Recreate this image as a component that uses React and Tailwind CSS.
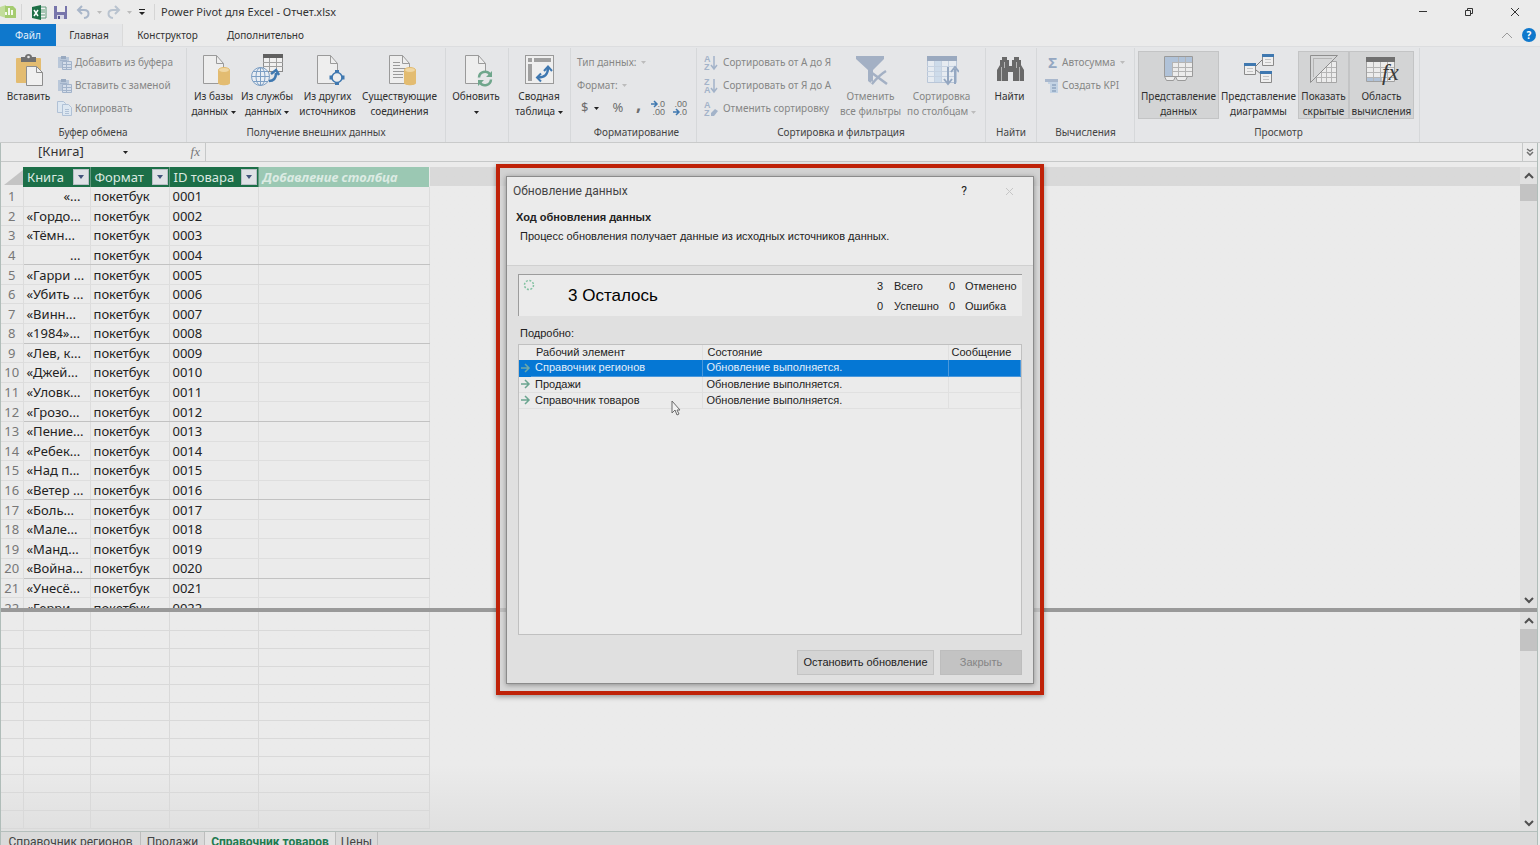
import { clsx } from "clsx";

const books = [
  "«...",
  "«Гордо...",
  "«Тёмн...",
  "...",
  "«Гарри ...",
  "«Убить ...",
  "«Винн...",
  "«1984»...",
  "«Лев, к...",
  "«Джей...",
  "«Уловк...",
  "«Грозо...",
  "«Пение...",
  "«Ребек...",
  "«Над п...",
  "«Ветер ...",
  "«Боль...",
  "«Мале...",
  "«Манд...",
  "«Война...",
  "«Унесё...",
  "«Герри...",
];

const rightAligned = [1, 4];
const groupEnds = [4, 8, 12, 16, 20];

const tasks = ["Справочник регионов", "Продажи", "Справочник товаров"];

const sheets = [
  { name: "Справочник регионов", width: "w-[140px]" },
  { name: "Продажи", width: "w-16" },
  { name: "Справочник товаров", width: "w-[131px]", active: true },
  { name: "Цены", width: "w-[42px]" },
];

/* ---------- icons ---------- */

function Page({ lines }) {
  return (
    <>
      <path d="M6.500 2.500h13l7 8v20h-20z" fill="#eeeeee" stroke="#9a9a9a" />
      <path d="M19.500 2.500v8h7" fill="none" stroke="#9a9a9a" />
      {lines && (
        <path
          d="M10 9.500h7M10 12.500h7M10 15.500h13M10 18.500h13M10 21.500h10M10 24.500h10"
          stroke="#9a9a9a"
        />
      )}
    </>
  );
}

function Cylinder() {
  return (
    <>
      <path d="M21 17v13c0 3 12 3 12 0V17z" fill="#e3bc71" />
      <ellipse cx="27" cy="17" rx="5.500" ry="2.500" fill="#f0d7a3" stroke="#e3bc71" />
    </>
  );
}

function PasteIcon() {
  return (
    <svg width="34" height="34" viewBox="0 0 34 34">
      <rect x="4" y="5" width="25" height="25" rx="1" fill="#e3bc71" />
      <path d="M9 9V4h4c0-4 7-4 7 0h4v5z" fill="#707070" />
      <circle cx="16.500" cy="4" r="1.300" fill="#e8e8e8" />
      <path d="M14.500 13.500h10l6 6v13h-16z" fill="#f0f0f0" stroke="#8d8d8d" />
      <path d="M24.500 13.500v6h6" fill="none" stroke="#8d8d8d" />
    </svg>
  );
}

function DatabaseIcon() {
  return (
    <svg width="34" height="34" viewBox="0 0 34 34">
      <Page />
      <Cylinder />
    </svg>
  );
}

function ConnectionsIcon() {
  return (
    <svg width="34" height="34" viewBox="0 0 34 34">
      <Page lines />
      <Cylinder />
    </svg>
  );
}

function ServiceIcon() {
  return (
    <svg width="34" height="34" viewBox="0 0 34 34">
      <rect x="13.500" y="1.500" width="19" height="17" fill="#f0f0f0" stroke="#8a8a8a" />
      <path d="M13 1h20v4H13z" fill="#606060" />
      <path d="M13 9.500h20M13 13.500h20M19.500 5v13M26.500 5v13" stroke="#a0a0a0" />
      <circle cx="10.500" cy="23.500" r="9" fill="#e9eef4" stroke="#7d9fc4" />
      <ellipse cx="10.500" cy="23.500" rx="4.500" ry="9" fill="none" stroke="#7d9fc4" />
      <path d="M1.500 23.500h18M10.500 14v19M3 18.500h15M3 28.500h15" stroke="#7d9fc4" />
      <path d="M19 28c5 0 7-3 7-8" fill="none" stroke="#3f78b0" strokeWidth="2.500" />
      <path d="M21 21l5-4 3 5" fill="none" stroke="#3f78b0" strokeWidth="2.500" />
    </svg>
  );
}

function SourcesIcon() {
  return (
    <svg width="34" height="34" viewBox="0 0 34 34">
      <Page />
      <circle cx="26" cy="24.500" r="5" fill="#eeeeee" stroke="#3f78b0" strokeWidth="1.500" />
      <path d="M26 17v3M26 29v3M18.500 24.500h3M30.500 24.500h3" stroke="#3f78b0" strokeWidth="4" />
    </svg>
  );
}

function RefreshIcon() {
  return (
    <svg width="34" height="34" viewBox="0 0 34 34">
      <Page />
      <circle cx="26" cy="25.500" r="7.500" fill="#e5e6e8" />
      <path d="M20 24.500a6 6 0 0 1 11-3M32 26.500a6 6 0 0 1-11 3" fill="none" stroke="#6fa68c" strokeWidth="2.500" />
      <path d="M33 18v6h-6zM19 33v-6h6z" fill="#6fa68c" />
    </svg>
  );
}

function PivotIcon() {
  return (
    <svg width="34" height="34" viewBox="0 0 34 34">
      <rect x="3.500" y="2.500" width="28" height="28" fill="#efefef" stroke="#9a9a9a" />
      <path d="M6 5h4v4H6zM12 5h17v4H12zM6 11h4v17H6z" fill="#a0a0a0" />
      <path d="M16 24.500c7 0 10-3 10-10" fill="none" stroke="#3f78b0" strokeWidth="2.500" />
      <path d="M22 18l4-4.500 4 4.500M19 20.500l-4 4 4 4" fill="none" stroke="#3f78b0" strokeWidth="2" />
    </svg>
  );
}

function FilterIcon() {
  return (
    <svg width="34" height="34" viewBox="0 0 34 34">
      <path d="M2 3h28v3L19 17v15l-5-4V17L2 6z" fill="#a3b0c4" />
      <path d="M18 20l15 11M32 18c-5 3-10 8-14 13" fill="none" stroke="#e5e6e8" strokeWidth="4" />
      <path d="M14 17h5v12l-5-4z" fill="#a3b0c4" />
      <path d="M18 20l15 11M32 18c-5 3-10 8-14 13" fill="none" stroke="#a3b0c4" strokeWidth="2.500" />
    </svg>
  );
}

function SortColumnsIcon() {
  return (
    <svg width="34" height="34" viewBox="0 0 34 34">
      <path d="M2.500 3.500h29v26h-29z" fill="#e6ebf1" stroke="#b9c6d8" />
      <path d="M2 3h30v5H2z" fill="#9aa9bf" />
      <path d="M9 8h8v21H9z" fill="#cddbea" />
      <path d="M2 13.500h29M2 18.500h29M2 23.500h29M9.500 8v21M16.500 8v21M23.500 8v21" stroke="#c6d2e1" />
      <path d="M23 14v16M30 31V16" stroke="#94a7c1" strokeWidth="2" />
      <path d="M19 26l4 5 4-5M26 19l4-5 4 5" fill="none" stroke="#94a7c1" strokeWidth="2" />
    </svg>
  );
}

function BinocularsIcon() {
  return (
    <svg width="34" height="34" viewBox="0 0 34 34" fill="#696969">
      <path d="M9 4h5v3h2v6h3V7h2V4h5v3h2v5l3 5v11H20v-9h-5v9H4V17l3-5V7h2z" />
      <path d="M8.500 14v14M26.500 14v14M11.500 9v6M23.500 9v6" stroke="#b5b5b5" />
    </svg>
  );
}

function DataViewIcon() {
  return (
    <svg width="34" height="34" viewBox="0 0 34 34">
      <path d="M2.500 3.500h28v20h-28z" fill="#ececec" stroke="#9a9a9a" />
      <path d="M3 4h27v5H3zM3 9h7v14H3z" fill="#b0c2d8" />
      <path d="M10 9.500h20M10 14.500h20M10 18.500h20M10.500 9v14M16.500 4v19M23.500 4v19" stroke="#b4b4b4" />
      <path d="M2.500 23.500h11l-2 4h-7zM13.500 23.500h12l-2 4h-8z" fill="#ececec" stroke="#9a9a9a" />
    </svg>
  );
}

function DiagramViewIcon() {
  return (
    <svg width="34" height="34" viewBox="0 0 34 34">
      <path d="M14 13l6-6M14 17l5 4" stroke="#7b7b7b" />
      <path d="M20.500 1.500h11v11h-11zM2.500 10.500h11v11h-11zM18.500 18.500h11v11h-11z" fill="#efefef" stroke="#8a8a8a" />
      <path d="M20 1h12v3H20zM2 10h12v3H2zM18 18h12v3H18z" fill="#3f78b0" />
      <path d="M23 6.500h6M23 9.500h6M5 15.500h6M5 18.500h6M21 23.500h6M21 26.500h6" stroke="#c4c4c4" />
    </svg>
  );
}

function HiddenIcon() {
  return (
    <svg width="34" height="34" viewBox="0 0 34 34">
      <path d="M9.500 8.500h20v21h-20z" fill="#ececec" stroke="#a5a5a5" />
      <path d="M9 14.500h20M9 19.500h20M9 24.500h20M14.500 8v21M19.500 8v21M24.500 8v21" stroke="#b5b5b5" />
      <path d="M3.500 2.500h27l-27 27z" fill="#d6d7d8" stroke="#8e8e8e" />
      <path d="M6 5.500h19M6.500 5v19" stroke="#b5b5b5" />
    </svg>
  );
}

function CalcAreaIcon() {
  return (
    <svg width="34" height="34" viewBox="0 0 34 34">
      <path d="M1.500 4.500h28v24h-28z" fill="#ececec" stroke="#a0a0a0" />
      <path d="M2 24h15v4H2z" fill="#b0c2d8" />
      <path d="M2 14.500h27M2 19.500h27M2 24.500h27M8.500 9v19M15.500 9v19M22.500 9v19" stroke="#b5b5b5" />
      <path d="M1 4h29v5H1z" fill="#707070" />
      <text x="17" y="27" fontSize="23" fontStyle="italic" fontFamily="Liberation Serif, serif" fill="#3a3a3a">
        fx
      </text>
    </svg>
  );
}

function SmallClipIcon() {
  return (
    <svg width="16" height="16" viewBox="0 0 16 16">
      <path d="M1 2h11v11H1z" fill="#b9c7d9" />
      <path d="M4 1h5v3H4z" fill="#98a9c0" />
      <path d="M5.500 6.500h9v8h-9z" fill="#d5deea" stroke="#a2b3ca" />
      <path d="M3 5.500h7M6 9.500h8M6 12.500h8M9.500 7v7" stroke="#a2b3ca" />
    </svg>
  );
}

function CopyIcon() {
  return (
    <svg width="16" height="16" viewBox="0 0 16 16" fill="#dde7f1" stroke="#b0c1d6">
      <path d="M.5.5h6l2 2v9h-8z" />
      <path d="M5.500 3.500h6l3 3v8h-9z" />
      <path d="M8 8.500h4M8 10.500h4M8 12.500h4" />
    </svg>
  );
}

function SortIcon({ first, second, clear }) {
  return (
    <svg width="15" height="16" viewBox="0 0 15 16" className="mr-[2px]">
      <g fontSize="9" fontWeight="700" fontFamily="Liberation Sans, sans-serif" fill="#a3b3c9">
        <text x="0" y="7">{first}</text>
        <text x="0" y="15">{second}</text>
      </g>
      {clear ? (
        <path d="M7 12l4-4 3 2-4 5H7z" fill="#a3b3c9" />
      ) : (
        <path d="M10 1v12M7 10l3 4 3-4" fill="none" stroke="#a3b3c9" strokeWidth="1.500" />
      )}
    </svg>
  );
}

function KpiIcon() {
  return (
    <svg width="15" height="16" viewBox="0 0 15 16">
      <path d="M3 2h10v13H5V6H3z" fill="#c3d3e4" />
      <path d="M0 1h8v3H0zM5 1h8v3H5z" fill="#a9b8cd" />
      <path d="M7 7h4M7 10h4M7 13h4" stroke="#8fa5c0" strokeWidth="1.500" />
    </svg>
  );
}

function DecimalIcon({ top, bottom, more }) {
  return (
    <svg width="16" height="16" viewBox="0 0 16 16">
      <g fontSize="9" fontFamily="Liberation Sans, sans-serif" fill="#6d6d6d" textAnchor="end">
        <text x="15" y="7">{top}</text>
        <text x="15" y="15">{bottom}</text>
      </g>
      <path
        d={more ? "M1 4h6M4 1l3 3-3 3" : "M1 12h6M4 9l3 3-3 3"}
        fill="none"
        stroke="#3f78b0"
        strokeWidth="1.500"
      />
    </svg>
  );
}

function Caret({ faded }) {
  return (
    <svg width="5" height="3" viewBox="0 0 5 3" className="inline-block shrink-0 align-middle">
      <path d="M0 0h5L2.500 3z" fill={faded ? "#bcbcbc" : "#222"} />
    </svg>
  );
}

function Chevron({ down }) {
  return (
    <svg width="10" height="7" viewBox="0 0 10 7" fill="none" stroke="#505050" strokeWidth="2">
      <path d={down ? "M1 1l4 4 4-4" : "M1 6l4-4 4 4"} />
    </svg>
  );
}

/* ---------- title bar and tabs ---------- */

function TitleBar() {
  return (
    <header className="flex h-6 shrink-0 items-center bg-[#ebebeb] pr-5 text-[#333]">
      <svg width="16" height="18" viewBox="0 0 16 18" className="shrink-0">
        <path d="M0 4l6-2v13l-6-2z" fill="#c2dd9b" />
        <path d="M5 3h8l3 3v9H5z" fill="#a5cc70" />
        <path d="M6 12V9M9 12V5M12 12V7" stroke="#f4f9ec" strokeWidth="2" />
      </svg>
      <span className="mr-[10px] ml-[5px] h-4 w-px bg-[#d5d5d5]" />
      <svg width="15" height="15" viewBox="0 0 15 15">
        <path d="M7 2h7v11H7z" fill="#f1f1f1" stroke="#5e9a78" />
        <path d="M9 5h4M9 7h4M9 10h4" stroke="#5e9a78" />
        <path d="M0 2l9-2v15l-9-2z" fill="#1d6f46" />
        <path d="M2 5l4 6M6 5l-4 6" stroke="#fff" strokeWidth="1.500" />
      </svg>
      <button aria-label="Сохранить" className="ml-[6px]">
        <svg width="15" height="15" viewBox="0 0 15 15">
          <path d="M1 1h13v13H1z" fill="#7775ab" />
          <path d="M4 1h8v6H4z" fill="#ededed" />
          <path d="M4 10h7v4H4z" fill="#d8d8e6" />
          <path d="M5 11h2v3H5z" fill="#55538f" />
        </svg>
      </button>
      <button aria-label="Отменить" className="ml-2 flex items-center gap-[6px]">
        <svg width="15" height="14" viewBox="0 0 15 14" fill="none" stroke="#a9b6c9" strokeWidth="2">
          <path d="M6 1L2 5l4 4M2 5h6c6 0 6 7 0 8" />
        </svg>
        <Caret faded />
      </button>
      <button aria-label="Повторить" className="ml-1 flex items-center gap-[6px]">
        <svg width="15" height="14" viewBox="0 0 15 14" fill="none" stroke="#b9c3cf" strokeWidth="2">
          <path d="M9 1l4 4-4 4M13 5H7c-6 0-6 7 0 8" />
        </svg>
        <Caret faded />
      </button>
      <button aria-label="Настройка панели" className="ml-[7px]">
        <svg width="6" height="6" viewBox="0 0 6 6" fill="#222">
          <path d="M0 0h6v1H0zM0 3h6L3 6z" />
        </svg>
      </button>
      <span className="mr-[6px] ml-[9px] h-4 w-px bg-[#d5d5d5]" />
      <h1 className="text-[11px]">Power Pivot для Excel - Отчет.xlsx</h1>
      <div className="ml-auto flex items-center gap-9">
        <button aria-label="Свернуть">
          <svg width="10" height="10" viewBox="0 0 10 10" stroke="#333">
            <path d="M1 4.500h8" />
          </svg>
        </button>
        <button aria-label="Восстановить">
          <svg width="10" height="10" viewBox="0 0 10 10" fill="none" stroke="#333">
            <path d="M1.500 3.500h5v5h-5zM3.500 3V1.500h5v5H7" />
          </svg>
        </button>
        <button aria-label="Закрыть окно">
          <svg width="10" height="10" viewBox="0 0 10 10" stroke="#333">
            <path d="M1 1l8 8M9 1l-8 8" />
          </svg>
        </button>
      </div>
    </header>
  );
}

function RibbonTabs() {
  return (
    <nav className="flex h-[22px] shrink-0 items-stretch bg-[#ebebeb] text-[10px] text-[#333]">
      <button className="w-14 bg-[#0f78cc] text-[#e6f0fa]">Файл</button>
      <button className="w-[67px] border-r border-[#dadada] bg-[#e5e6e8]">Главная</button>
      <button className="w-[89px]">Конструктор</button>
      <button className="w-[107px]">Дополнительно</button>
      <div className="ml-auto flex items-center gap-[9px] pr-1">
        <button aria-label="Свернуть ленту">
          <svg width="12" height="7" viewBox="0 0 12 7" fill="none" stroke="#9a9a9a">
            <path d="M1 6l5-5 5 5" />
          </svg>
        </button>
        <button
          aria-label="Справка"
          className="flex h-[14px] w-[14px] items-center justify-center rounded-full bg-[#0f78cc] text-[10px] font-bold text-white"
        >
          ?
        </button>
      </div>
    </nav>
  );
}

/* ---------- ribbon ---------- */

function Group({ title, className, children }) {
  return (
    <section className={clsx("flex shrink-0 flex-col border-r border-[#d6d8da]", className)}>
      <div className="flex h-[76px] pt-[3px]">{children}</div>
      <h2 className="text-center text-[10px] leading-4 text-[#444]">{title}</h2>
    </section>
  );
}

function BigButton({ icon, lines, caret, pressed, faded, className }) {
  return (
    <button
      className={clsx(
        "flex h-[68px] shrink-0 flex-col items-center text-[10px] leading-[15px] whitespace-nowrap",
        pressed && "border border-[#c3c4c5] bg-[#d3d4d5]",
        !pressed && "border border-transparent",
        faded ? "text-[#868686]" : "text-[#303030]",
        className,
      )}
    >
      <span className="mt-px mb-[2px] block h-[34px]">{icon}</span>
      {lines.map((line, i) => (
        <span key={line}>
          {line}
          {caret && i === lines.length - 1 && (
            <>
              {" "}
              <Caret faded={faded} />
            </>
          )}
        </span>
      ))}
    </button>
  );
}

function SmallButton({ icon, children, caret }) {
  return (
    <button className="flex h-[23px] items-center gap-[2px] text-[10px] whitespace-nowrap text-[#868686]">
      {icon}
      {children}
      {caret && <Caret faded />}
    </button>
  );
}

function Ribbon() {
  return (
    <div className="flex h-[97px] shrink-0 overflow-hidden border-t border-b border-t-[#dcdddf] border-b-[#c9caca] bg-[#e5e6e8] pt-px">
      <Group title="Буфер обмена" className="w-[187px]">
        <BigButton icon={<PasteIcon />} lines={["Вставить"]} className="w-[57px]" />
        <div className="flex flex-col">
          <SmallButton icon={<SmallClipIcon />}>Добавить из буфера</SmallButton>
          <SmallButton icon={<SmallClipIcon />}>Вставить с заменой</SmallButton>
          <SmallButton icon={<CopyIcon />}>Копировать</SmallButton>
        </div>
      </Group>
      <Group title="Получение внешних данных" className="w-[259px]">
        <BigButton icon={<DatabaseIcon />} lines={["Из базы", "данных"]} caret className="w-[53px]" />
        <BigButton icon={<ServiceIcon />} lines={["Из службы", "данных"]} caret className="w-[54px]" />
        <BigButton icon={<SourcesIcon />} lines={["Из других", "источников"]} className="w-[67px]" />
        <BigButton icon={<ConnectionsIcon />} lines={["Существующие", "соединения"]} className="w-[77px]" />
      </Group>
      <Group className="w-[63px]">
        <BigButton icon={<RefreshIcon />} lines={["Обновить", ""]} caret className="w-[60px]" />
      </Group>
      <Group className="w-[62px]">
        <BigButton icon={<PivotIcon />} lines={["Сводная", "таблица"]} caret className="w-[60px]" />
      </Group>
      <Group title="Форматирование" className="w-[126px] pl-[6px]">
        <div className="flex flex-col">
          <SmallButton caret>Тип данных:&nbsp;</SmallButton>
          <SmallButton caret>Формат:&nbsp;</SmallButton>
          <div className="flex h-[22px] items-center text-[13px] text-[#6d6d6d]">
            <button className="flex w-8 items-center gap-[6px] pl-1">
              $ <Caret />
            </button>
            <button className="w-[22px] pr-1">%</button>
            <button aria-label="Формат с разделителями" className="w-[19px] pr-1 pb-2 text-lg font-bold">
              ,
            </button>
            <button aria-label="Увеличить разрядность" className="w-[22px]">
              <DecimalIcon top=".0" bottom=".00" more />
            </button>
            <button aria-label="Уменьшить разрядность" className="w-[22px]">
              <DecimalIcon top=".00" bottom=".0" />
            </button>
          </div>
        </div>
      </Group>
      <Group title="Сортировка и фильтрация" className="w-[289px]">
        <div className="flex w-[141px] flex-col pl-[7px]">
          <SmallButton icon={<SortIcon first="А" second="Z" />}>Сортировать от А до Я</SmallButton>
          <SmallButton icon={<SortIcon first="Z" second="А" />}>Сортировать от Я до А</SmallButton>
          <SmallButton icon={<SortIcon first="А" second="Z" clear />}>Отменить сортировку</SmallButton>
        </div>
        <BigButton icon={<FilterIcon />} lines={["Отменить", "все фильтры"]} faded className="w-[65px]" />
        <BigButton icon={<SortColumnsIcon />} lines={["Сортировка", "по столбцам"]} caret faded className="w-[77px]" />
      </Group>
      <Group title="Найти" className="w-[51px]">
        <BigButton icon={<BinocularsIcon />} lines={["Найти"]} className="w-[47px]" />
      </Group>
      <Group title="Вычисления" className="w-[98px]">
        <div className="flex flex-col pl-2">
          <SmallButton icon={<span className="w-[15px] text-[15px] font-bold text-[#94a7c1]">Σ</span>} caret>
            Автосумма&nbsp;
          </SmallButton>
          <SmallButton icon={<KpiIcon />}>Создать KPI</SmallButton>
        </div>
      </Group>
      <Group title="Просмотр" className="w-[285px] pl-[3px]">
        <BigButton icon={<DataViewIcon />} lines={["Представление", "данных"]} pressed className="w-[81px]" />
        <BigButton icon={<DiagramViewIcon />} lines={["Представление", "диаграммы"]} className="w-[79px]" />
        <BigButton icon={<HiddenIcon />} lines={["Показать", "скрытые"]} pressed className="w-[51px]" />
        <BigButton icon={<CalcAreaIcon />} lines={["Область", "вычисления"]} pressed className="w-[65px]" />
      </Group>
    </div>
  );
}

/* ---------- workbook ---------- */

function FormulaBar() {
  return (
    <div className="flex h-[19px] shrink-0 items-stretch border-b border-[#c6c8c8] bg-[#ebebeb]">
      <div className="flex w-[205px] items-center border-r border-[#c6c8c8] pl-[37px] text-[13px] text-[#333]">
        <span className="w-[85px]">[Книга]</span>
        <Caret />
        <span className="ml-auto pr-[5px] font-['Liberation_Serif',serif] text-[#777] italic">fx</span>
      </div>
      <input aria-label="Строка формул" className="min-w-0 flex-1 outline-none" />
      <button
        aria-label="Развернуть строку формул"
        className="flex w-[15px] items-center justify-center border-l border-[#c6c8c8]"
      >
        <svg width="8" height="8" viewBox="0 0 8 8" fill="none" stroke="#707070" strokeWidth="1.500">
          <path d="M1 1l3 2 3-2M1 4l3 3 3-3" />
        </svg>
      </button>
    </div>
  );
}

function Columns() {
  return (
    <colgroup>
      <col className="w-[22px]" />
      <col className="w-[67px]" />
      <col className="w-[79px]" />
      <col className="w-[89px]" />
      <col className="w-[171px]" />
    </colgroup>
  );
}

function HeaderCell({ children }) {
  return (
    <th scope="col" className="border-r border-[#5f977d] bg-[#1c6f48] p-0 font-normal text-[#dbe9e1]">
      <span className="flex items-center justify-between pr-px pl-1">
        {children}
        <button
          aria-label={`Фильтр: ${children}`}
          className="flex h-4 w-4 items-center justify-center border border-[#b9bfc6] bg-[#dfe2e6]"
        >
          <svg width="6" height="4" viewBox="0 0 6 4" fill="#44557c">
            <path d="M0 0h6L3 4z" />
          </svg>
        </button>
      </span>
    </th>
  );
}

function ScrollBar({ thumb }) {
  return (
    <div className="flex w-[17px] shrink-0 flex-col items-center bg-[#e0e0e0]">
      <span className="flex h-[17px] items-center">
        <Chevron />
      </span>
      <span className={clsx("w-full bg-[#c3c3c3]", thumb)} />
      <span className="mt-auto flex h-4 items-center">
        <Chevron down />
      </span>
    </div>
  );
}

function DataGrid() {
  return (
    <div className="flex h-[441px] shrink-0 overflow-hidden">
      <div className="min-w-0 flex-1 bg-linear-to-b from-[#d9d9d9] from-[19px] to-[#ebebeb] to-[19px]">
        <table className="h-[451px] w-[428px] table-fixed border-collapse bg-[#ebebeb] text-[13px] leading-[18px] text-[#222]">
          <Columns />
          <thead>
            <tr className="h-5">
              <th className="p-0">
                <svg width="19" height="15" viewBox="0 0 19 15" className="ml-[3px]">
                  <path d="M19 0v15H0z" fill="#c4c4c4" />
                </svg>
              </th>
              <HeaderCell>Книга</HeaderCell>
              <HeaderCell>Формат</HeaderCell>
              <HeaderCell>ID товара</HeaderCell>
              <th scope="col" className="bg-[#9bc8b3] p-0 pl-1 text-left font-bold text-[#dcebe3] italic">
                Добавление столбца
              </th>
            </tr>
          </thead>
          <tbody>
            {books.map((book, i) => {
              const n = i + 1;
              const line = groupEnds.includes(n) ? "border-b-[#c2c2c2]" : "border-b-[#dedede]";
              const cell = clsx("border-r border-b border-r-[#dcdcdc] p-0 pl-[3px] whitespace-nowrap", line);
              return (
                <tr key={n}>
                  <th scope="row" className="border-r border-b border-[#dcdcdc] p-0 text-center font-normal text-[#777]">
                    {n}
                  </th>
                  <td className={clsx(cell, rightAligned.includes(n) && "pr-[9px] text-right")}>{book}</td>
                  <td className={cell}>покетбук</td>
                  <td className={cell}>{String(n).padStart(4, "0")}</td>
                  <td className={cell}></td>
                </tr>
              );
            })}
          </tbody>
        </table>
      </div>
      <ScrollBar thumb="h-[17px]" />
    </div>
  );
}

function MeasureGrid() {
  return (
    <div className="flex min-h-[219px] flex-1 overflow-hidden">
      <div className="min-w-0 flex-1 overflow-hidden bg-linear-to-b from-[#ebebeb] from-70% to-[#e0e0e0]">
        <table className="w-[428px] table-fixed border-collapse">
          <Columns />
          <tbody>
            {Array.from({ length: 12 }, (_, row) => (
              <tr key={row} className="h-[18px]">
                {Array.from({ length: 5 }, (_, col) => (
                  <td key={col} className="border-r border-b border-[#d9d9d9] p-0"></td>
                ))}
              </tr>
            ))}
          </tbody>
        </table>
      </div>
      <ScrollBar thumb="h-[22px]" />
    </div>
  );
}

function SheetTabs() {
  return (
    <div className="flex h-[15px] shrink-0 items-start overflow-hidden border-t border-[#b5bfbc] bg-[#dadada] font-['Roboto',sans-serif] text-xs leading-[20px] text-[#444]">
      {sheets.map(({ name, width, active }) => (
        <button
          key={name}
          className={clsx(
            "border-r border-[#bdbdbd] whitespace-nowrap",
            width,
            active && "bg-[#e3e3e3] font-bold text-[#1f7a50]",
          )}
        >
          {name}
        </button>
      ))}
    </div>
  );
}

/* ---------- refresh dialog ---------- */

function TaskRow({ name, selected }) {
  const cell = clsx("border-r border-b p-0 pl-1", selected ? "border-[#4a98dc]" : "border-[#e0e0e0]");
  return (
    <tr className={clsx("h-4", selected && "bg-[#0577d4] text-[#e3eefa]")}>
      <td className={clsx("border-b p-0", selected ? "border-[#0577d4]" : "border-[#e0e0e0]")}>
        <svg width="12" height="10" viewBox="0 0 12 10" fill="none" stroke={selected ? "#6fa9a8" : "#6ba590"} strokeWidth="1.500">
          <path d="M2 5h8M6 1l4 4-4 4" />
        </svg>
      </td>
      <td className={cell}>{name}</td>
      <td className={cell}>Обновление выполняется.</td>
      <td className={cell}></td>
    </tr>
  );
}

function RefreshDialog() {
  return (
    <div className="pointer-events-none absolute inset-x-0 top-[164px] flex justify-center font-['Liberation_Sans',Arial,sans-serif]">
      <div className="pointer-events-auto w-[548px] border-4 border-[#bf2208] bg-[#cfcfcf]/70 px-[6px] pt-2 pb-[7px] shadow-[0_2px_5px_rgba(0,0,0,0.35)]">
        <div
          role="dialog"
          aria-labelledby="refresh-title"
          className="flex h-[508px] flex-col border border-[#8b8b8b] bg-[#e0e0e0] text-[11px] text-[#222] shadow-[0_1px_5px_rgba(0,0,0,0.35)]"
        >
          <div className="h-[89px] border-b border-[#d0d0d0] bg-[#ebebeb]">
            <div className="flex h-7 items-center pl-[6px] font-['Roboto',sans-serif]">
              <h2 id="refresh-title" className="text-xs text-[#444]">Обновление данных</h2>
              <button aria-label="Справка по обновлению" className="ml-auto w-3 text-xs">
                ?
              </button>
              <button aria-label="Закрыть диалог" disabled className="mr-[19px] ml-[35px]">
                <svg width="9" height="9" viewBox="0 0 9 9" stroke="#c6c6c6">
                  <path d="M1 1l7 7M8 1L1 8" />
                </svg>
              </button>
            </div>
            <h3 className="pl-[9px] leading-6 font-bold">Ход обновления данных</h3>
            <p className="pl-[13px] leading-[15px]">Процесс обновления получает данные из исходных источников данных.</p>
          </div>
          <div className="flex flex-1 flex-col px-[11px] pt-2">
            <div className="flex h-[42px] border-t border-l border-[#9c9c9c] bg-[#ebebeb]">
              <svg width="12" height="12" viewBox="0 0 12 12" className="mt-1 ml-1">
                <circle cx="6" cy="6" r="4.500" fill="none" stroke="#84c2a3" strokeWidth="1.500" strokeDasharray="2 1.500" />
              </svg>
              <strong className="ml-[33px] self-center text-[17px] leading-5 font-normal text-black">3 Осталось</strong>
              <dl className="mr-[2px] ml-auto grid grid-cols-[17px_55px_16px_55px] content-center leading-5">
                <dd>3</dd>
                <dt>Всего</dt>
                <dd>0</dd>
                <dt>Отменено</dt>
                <dd>0</dd>
                <dt>Успешно</dt>
                <dd>0</dd>
                <dt>Ошибка</dt>
              </dl>
            </div>
            <p className="mt-[9px] mb-[3px] pl-[2px] leading-4">Подробно:</p>
            <div className="h-[291px] border border-[#c0c0c0] bg-[#ebebeb]">
              <table className="w-full table-fixed border-collapse text-left leading-[15px] whitespace-nowrap">
                <colgroup>
                  <col className="w-3" />
                  <col className="w-[171px]" />
                  <col className="w-[246px]" />
                  <col />
                </colgroup>
                <thead>
                  <tr>
                    <th className="p-0"></th>
                    <th scope="col" className="border-r border-[#e0e0e0] p-0 pl-[5px] font-normal">Рабочий элемент</th>
                    <th scope="col" className="border-r border-[#e0e0e0] p-0 pl-[5px] font-normal">Состояние</th>
                    <th scope="col" className="p-0 pl-[3px] font-normal">Сообщение</th>
                  </tr>
                </thead>
                <tbody>
                  {tasks.map((task, i) => (
                    <TaskRow key={task} name={task} selected={i === 0} />
                  ))}
                </tbody>
              </table>
            </div>
            <div className="mt-[15px] flex justify-end gap-[6px]">
              <button className="h-[25px] w-[137px] border border-[#c3c3c3] bg-[#d4d4d4]">Остановить обновление</button>
              <button disabled className="h-[25px] w-[82px] border border-[#bdbdbd] bg-[#c3c3c3] text-[#858585]">
                Закрыть
              </button>
            </div>
          </div>
        </div>
      </div>
      <svg width="10" height="16" viewBox="0 0 10 16" className="absolute top-[236px] left-1/2 -ml-[99px]">
        <path d="M1 1v12l3-3 2 5 2-1-2-4h3z" fill="#f2f2f2" stroke="#6b6b6b" />
      </svg>
    </div>
  );
}

function App() {
  return (
    <div className="relative flex h-screen flex-col overflow-hidden bg-[#ebebeb] font-['Noto_Sans','Open_Sans',sans-serif]">
      <TitleBar />
      <RibbonTabs />
      <main className="flex min-h-0 flex-1 flex-col">
        <Ribbon />
        <div className="mr-[2px] flex min-h-0 flex-1 flex-col border-x border-[#b0bdb9]">
          <FormulaBar />
          <div className="h-[5px] shrink-0" />
          <DataGrid />
          <div className="h-1 shrink-0 bg-[#999]" />
          <MeasureGrid />
          <SheetTabs />
        </div>
      </main>
      <RefreshDialog />
    </div>
  );
}

export default App;
